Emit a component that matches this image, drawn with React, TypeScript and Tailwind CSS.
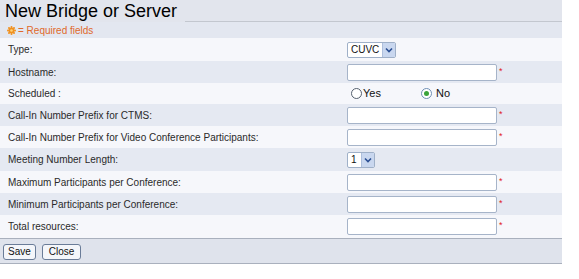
import React from "react";

const Star = () => (
  <span className="text-[#e01818] text-[9px] leading-none ml-[2px] -mt-[2px]">*</span>
);

const TextInput = () => (
  <div className="flex items-center">
    <div className="w-[150px] h-[17px] bg-white border border-[#a6b4c9] rounded-[2px]" />
    <Star />
  </div>
);

const Select = ({ value, width }: { value: string; width: string }) => (
  <div className={`flex h-[16px] ${width} bg-white border border-[#9fb0c8] rounded-[2px] overflow-hidden`}>
    <div className="flex-1 text-[10px] leading-[14px] pl-[3px] text-[#111]">{value}</div>
    <div className="w-[13px] h-full bg-[#c9d7ef] border-l border-[#aebfdc] flex items-center justify-center">
      <svg width="8" height="6" viewBox="0 0 8 6">
        <path d="M1 1.5 L4 4.5 L7 1.5" fill="none" stroke="#2b4f93" strokeWidth="1.6" />
      </svg>
    </div>
  </div>
);

const Radio = ({ checked }: { checked?: boolean }) => (
  <div
    className={`w-[11px] h-[11px] rounded-full border flex items-center justify-center bg-white ${
      checked ? "border-[#6f8fb5]" : "border-[#55606e]"
    }`}
  >
    {checked && <div className="w-[5px] h-[5px] rounded-full bg-[#3ba43b]" />}
  </div>
);

const Row = ({
  label,
  h,
  alt,
  children,
}: {
  label: string;
  h: string;
  alt?: boolean;
  children: React.ReactNode;
}) => (
  <div className={`flex items-center ${h} ${alt ? "bg-[#e5e9f2]" : "bg-[#f6f7fb]"}`}>
    <div className="w-[347px] pl-[8px] text-[10px] text-[#2a2a2a]">{label}</div>
    <div className="flex items-center">{children}</div>
  </div>
);

export default function App() {
  return (
    <div className="w-[579px] h-[279px] bg-white font-['Liberation_Sans',Arial,sans-serif]">
      <div className="w-[562px]">
        <div className="flex h-[22px] bg-[#e2e5ed]">
          <div className="pl-[5px] w-[185px] text-[18px] leading-[22px] text-black">New Bridge or Server</div>
          <div className="flex-1 border-b border-[#c3c7cf]" />
        </div>
        <div className="flex items-center h-[16px] bg-[#e3e7f0] pl-[7px] text-[10px] text-[#e0692b]">
          <svg width="9" height="9" viewBox="0 0 9 9" className="mr-[2px]">
            <g fill="#f0901e">
              <circle cx="4.5" cy="4.5" r="3" />
              <circle cx="4.5" cy="1" r="1" />
              <circle cx="4.5" cy="8" r="1" />
              <circle cx="1" cy="4.5" r="1" />
              <circle cx="8" cy="4.5" r="1" />
              <circle cx="2" cy="2" r="1" />
              <circle cx="7" cy="2" r="1" />
              <circle cx="2" cy="7" r="1" />
              <circle cx="7" cy="7" r="1" />
            </g>
            <circle cx="4.5" cy="4.5" r="1.3" fill="#ffd27a" />
          </svg>
          <span>= Required fields</span>
        </div>
        <Row label="Type:" h="h-[23px]">
          <Select value="CUVC" width="w-[49px]" />
        </Row>
        <Row label="Hostname:" h="h-[22px]" alt>
          <TextInput />
        </Row>
        <Row label="Scheduled :" h="h-[21px]">
          <div className="flex items-center text-[11px] text-[#111]">
            <div className="ml-[4px]"><Radio /></div>
            <span className="ml-[1px]">Yes</span>
            <div className="ml-[40px]"><Radio checked /></div>
            <span className="ml-[4px]">No</span>
          </div>
        </Row>
        <Row label="Call-In Number Prefix for CTMS:" h="h-[22px]" alt>
          <TextInput />
        </Row>
        <Row label="Call-In Number Prefix for Video Conference Participants:" h="h-[22px]">
          <TextInput />
        </Row>
        <Row label="Meeting Number Length:" h="h-[23px]" alt>
          <Select value="1" width="w-[28px]" />
        </Row>
        <Row label="Maximum Participants per Conference:" h="h-[22px]">
          <TextInput />
        </Row>
        <Row label="Minimum Participants per Conference:" h="h-[22px]" alt>
          <TextInput />
        </Row>
        <Row label="Total resources:" h="h-[23px]">
          <TextInput />
        </Row>
        <div className="flex items-center gap-[6px] h-[26px] pl-[3px] pt-[2px] bg-[#dfe3ec] border-t border-b border-[#a9b0bd]">
          <button className="h-[16px] px-[4px] text-[10px] leading-[14px] text-[#111] bg-[#f4f6fa] border border-[#6a7c98] rounded-[3px]">
            Save
          </button>
          <button className="h-[16px] px-[6px] text-[10px] leading-[14px] text-[#111] bg-[#f4f6fa] border border-[#6a7c98] rounded-[3px]">
            Close
          </button>
        </div>
      </div>
    </div>
  );
}
